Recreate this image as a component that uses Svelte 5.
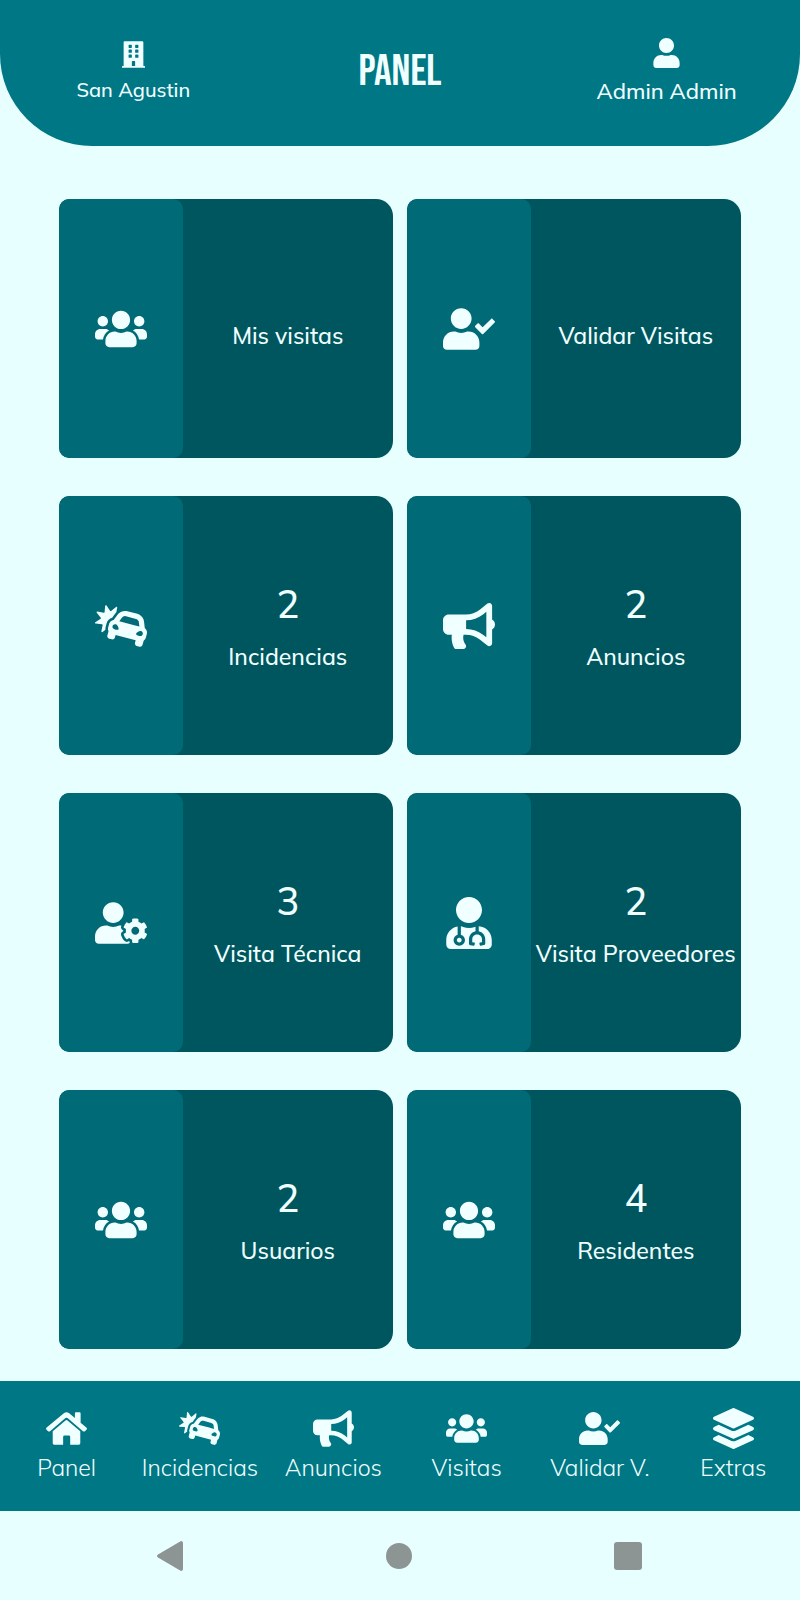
<script>
  const icons = {
    users: {
      box: '0 0 640 512',
      d: 'M96 224c35.3 0 64-28.7 64-64s-28.7-64-64-64-64 28.7-64 64 28.7 64 64 64zm448 0c35.3 0 64-28.7 64-64s-28.7-64-64-64-64 28.7-64 64 28.7 64 64 64zm32 32h-64c-17.6 0-33.5 7.1-45.1 18.6 40.3 22.1 68.9 62 75.1 109.4h66c17.7 0 32-14.3 32-32v-32c0-35.3-28.7-64-64-64zm-256 0c61.9 0 112-50.1 112-112S381.9 32 320 32 208 82.1 208 144s50.1 112 112 112zm76.8 32h-8.3c-20.8 10-43.9 16-68.5 16s-47.6-6-68.5-16h-8.3C179.6 288 128 339.6 128 403.2V432c0 26.5 21.5 48 48 48h288c26.5 0 48-21.5 48-48v-28.8c0-63.6-51.6-115.2-115.2-115.2zm-223.7-13.4C161.5 263.1 145.6 256 128 256H64c-35.3 0-64 28.7-64 64v32c0 17.7 14.3 32 32 32h65.9c6.3-47.4 34.9-87.3 75.2-109.4z'
    },
    check: {
      box: '0 0 640 512',
      d: 'M224 256c70.7 0 128-57.3 128-128S294.7 0 224 0 96 57.3 96 128s57.3 128 128 128zm89.6 32h-16.7c-22.2 10.2-46.9 16-72.9 16s-50.6-5.8-72.9-16h-16.7C60.2 288 0 348.2 0 422.4V464c0 26.5 21.5 48 48 48h352c26.5 0 48-21.5 48-48v-41.6c0-74.2-60.2-134.4-134.4-134.4zm323-128.4l-27.8-28.1c-4.6-4.7-12.1-4.7-16.8-.1l-104.8 104-45.5-45.8c-4.6-4.7-12.1-4.7-16.8-.1l-28.1 27.9c-4.7 4.6-4.7 12.1-.1 16.8l81.7 82.3c4.6 4.7 12.1 4.7 16.8.1l141.3-140.2c4.6-4.7 4.7-12.2.1-16.8z'
    },
    crash: {
      box: '0 0 640 512',
      d: 'M143.25 220.81l-12.42 46.37c-3.01 11.25-3.63 22.89-2.41 34.39l-35.2 28.98c-6.57 5.41-16.31-.43-14.62-8.77l15.44-76.68c1.06-5.26-2.66-10.28-8-10.79l-77.86-7.55c-8.47-.82-11.23-11.83-4.14-16.54l65.15-43.3c4.46-2.97 5.38-9.15 1.98-13.29L21.46 93.22c-5.41-6.57.43-16.3 8.78-14.62l76.68 15.44c5.26 1.06 10.28-2.66 10.8-8l7.55-77.86c.82-8.48 11.83-11.23 16.55-4.14l43.3 65.14c2.97 4.46 9.15 5.38 13.29 1.98l60.4-49.71c6.57-5.41 16.3.43 14.62 8.77L262.1 86.38c-2.71 3.05-5.43 6.09-7.91 9.4l-32.15 42.97-10.71 14.32c-32.73 8.76-59.18 34.53-68.08 67.74zm494.57 132.51l-12.42 46.36c-3.13 11.68-9.38 21.61-17.55 29.36a66.876 66.876 0 0 1-8.76 7l-13.99 52.23c-1.14 4.27-3.1 8.1-5.65 11.38-7.67 9.84-20.74 14.68-33.54 11.25L515 502.62c-17.07-4.57-27.2-22.12-22.63-39.19l8.28-30.91-247.28-66.26-8.28 30.91c-4.57 17.07-22.12 27.2-39.19 22.63l-30.91-8.28c-12.8-3.43-21.7-14.16-23.42-26.51-.57-4.12-.35-8.42.79-12.68l13.99-52.23a66.62 66.62 0 0 1-4.09-10.45c-3.2-10.79-3.65-22.52-.52-34.2l12.42-46.37c5.31-19.8 19.36-34.83 36.89-42.21a64.336 64.336 0 0 1 18.49-4.72l18.13-24.23 32.15-42.97c3.45-4.61 7.19-8.9 11.2-12.84 8-7.89 17.03-14.44 26.74-19.51 4.86-2.54 9.89-4.71 15.05-6.49 10.33-3.58 21.19-5.63 32.24-6.04 11.05-.41 22.31.82 33.43 3.8l122.68 32.87c11.12 2.98 21.48 7.54 30.85 13.43a111.11 111.11 0 0 1 34.69 34.5c8.82 13.88 14.64 29.84 16.68 46.99l6.36 53.29 3.59 30.05a64.49 64.49 0 0 1 22.74 29.93c4.39 11.88 5.29 25.19 1.75 38.39zM255.58 234.34c-18.55-4.97-34.21 4.04-39.17 22.53-4.96 18.49 4.11 34.12 22.65 39.09 18.55 4.97 45.54 15.51 50.49-2.98 4.96-18.49-15.43-53.67-33.97-58.64zm290.61 28.17l-6.36-53.29c-.58-4.87-1.89-9.53-3.82-13.86-5.8-12.99-17.2-23.01-31.42-26.82l-122.68-32.87a48.008 48.008 0 0 0-50.86 17.61l-32.15 42.97 172 46.08 75.29 20.18zm18.49 54.65c-18.55-4.97-53.8 15.31-58.75 33.79-4.95 18.49 23.69 22.86 42.24 27.83 18.55 4.97 34.21-4.04 39.17-22.53 4.95-18.48-4.11-34.12-22.66-39.09z'
    },
    horn: {
      box: '0 0 576 512',
      d: 'M576 240c0-23.63-12.95-44.04-32-55.12V32.01C544 23.26 537.02 0 512 0c-7.12 0-14.19 2.38-19.98 7.02l-85.03 68.03C364.28 109.19 310.66 128 256 128H64c-35.35 0-64 28.65-64 64v96c0 35.35 28.65 64 64 64h33.7c-1.39 10.48-2.18 21.14-2.18 32 0 39.77 9.26 77.35 25.56 110.94 5.19 10.69 16.52 17.06 28.4 17.06h74.28c26.05 0 41.69-29.84 25.9-50.56-16.4-21.52-26.15-48.36-26.15-77.44 0-11.11 1.62-21.79 4.41-32H256c54.66 0 108.28 18.81 150.98 52.95l85.03 68.03a32.023 32.023 0 0 0 19.98 7.02c24.92 0 32-22.78 32-32V295.13C563.05 284.04 576 263.63 576 240zm-96 141.42l-33.05-26.44C392.95 311.78 325.12 288 256 288v-96c69.12 0 136.95-23.78 190.95-66.98L480 98.58v282.84z'
    },
    cog: {
      box: '0 0 640 512',
      d: 'M610.5 373.3c2.6-14.1 2.6-28.5 0-42.6l25.8-14.9c3-1.7 4.3-5.2 3.3-8.5-6.7-21.6-18.2-41.2-33.2-57.4-2.3-2.5-6-3.1-9-1.4l-25.8 14.9c-10.9-9.3-23.4-16.5-36.9-21.3v-29.8c0-3.4-2.4-6.4-5.7-7.1-22.3-5-45-4.8-66.2 0-3.3.7-5.7 3.7-5.7 7.1v29.8c-13.5 4.8-26 12-36.9 21.3l-25.8-14.9c-2.9-1.7-6.7-1.1-9 1.4-15 16.2-26.5 35.8-33.2 57.4-1 3.3.4 6.8 3.3 8.5l25.8 14.9c-2.6 14.1-2.6 28.5 0 42.6l-25.8 14.9c-3 1.7-4.3 5.2-3.3 8.5 6.7 21.6 18.2 41.1 33.2 57.4 2.3 2.5 6 3.1 9 1.4l25.8-14.9c10.9 9.3 23.4 16.5 36.9 21.3v29.8c0 3.4 2.4 6.4 5.7 7.1 22.3 5 45 4.8 66.2 0 3.3-.7 5.7-3.7 5.7-7.1v-29.8c13.5-4.8 26-12 36.9-21.3l25.8 14.9c2.9 1.7 6.7 1.1 9-1.4 15-16.2 26.5-35.8 33.2-57.4 1-3.3-.4-6.8-3.3-8.5l-25.8-14.9zM496 400.5c-26.8 0-48.5-21.8-48.5-48.5s21.8-48.5 48.5-48.5 48.5 21.8 48.5 48.5-21.7 48.5-48.5 48.5zM224 256c70.7 0 128-57.3 128-128S294.7 0 224 0 96 57.3 96 128s57.3 128 128 128zm201.2 226.5c-2.3-1.2-4.6-2.6-6.8-3.9l-7.9 4.6c-6 3.4-12.8 5.3-19.6 5.3-10.9 0-21.4-4.6-28.9-12.6-18.3-19.8-32.3-43.9-40.2-69.6-5.5-17.7 1.9-36.4 17.9-45.7l7.9-4.6c-.1-2.6-.1-5.2 0-7.8l-7.9-4.6c-16-9.2-23.4-28-17.9-45.7.9-2.9 2.2-5.8 3.2-8.7-3.8-.3-7.5-1.2-11.4-1.2h-16.7c-22.2 10.2-46.9 16-72.9 16s-50.6-5.8-72.9-16h-16.7C60.2 288 0 348.2 0 422.4V464c0 26.5 21.5 48 48 48h352c10.1 0 19.5-3.2 27.2-8.5-1.2-3.8-2-7.7-2-11.8v-9.2z'
    },
    doctor: {
      box: '-32 0 512 512',
      d: 'M224 256c70.7 0 128-57.3 128-128S294.7 0 224 0 96 57.3 96 128s57.3 128 128 128zM104 424c0 13.3 10.7 24 24 24s24-10.7 24-24-10.7-24-24-24-24 10.7-24 24zm216-135.4v49c36.5 7.4 64 39.8 64 78.4v41.7c0 7.6-5.4 14.2-12.9 15.7l-32.2 6.4c-4.3.9-8.5-1.9-9.4-6.3l-3.1-15.7c-.9-4.3 1.9-8.6 6.3-9.4l19.3-3.9V416c0-62.8-96-65.1-96 1.9v26.7l19.3 3.9c4.3.9 7.1 5.1 6.3 9.4l-3.1 15.7c-.9 4.3-5.1 7.1-9.4 6.3l-31.2-4.2c-7.9-1.1-13.8-7.8-13.8-15.9V416c0-38.6 27.5-70.9 64-78.4v-45.2c-2.2.7-4.4 1.1-6.6 1.9-18 6.3-37.3 9.8-57.4 9.8s-39.4-3.5-57.4-9.8c-7.4-2.6-14.9-4.2-22.6-5.2v81.6c23.1 6.9 40 28.1 40 53.4 0 30.9-25.1 56-56 56s-56-25.1-56-56c0-25.3 16.9-46.5 40-53.4v-80.4C48.5 301 0 355.8 0 422.4v44.8C0 491.9 20.1 512 44.8 512h358.4c24.7 0 44.8-20.1 44.8-44.8v-44.8c0-72-56.8-130.3-128-133.8z'
    },
    user: {
      box: '0 0 448 512',
      d: 'M224 256c70.7 0 128-57.3 128-128S294.7 0 224 0 96 57.3 96 128s57.3 128 128 128zm89.6 32h-16.7c-22.2 10.2-46.9 16-72.9 16s-50.6-5.8-72.9-16h-16.7C60.2 288 0 348.2 0 422.4V464c0 26.5 21.5 48 48 48h352c26.5 0 48-21.5 48-48v-41.6c0-74.2-60.2-134.4-134.4-134.4z'
    },
    building: {
      box: '0 0 448 512',
      d: 'M436 480h-20V24c0-13.3-10.7-24-24-24H56C42.7 0 32 10.7 32 24v456H12c-6.6 0-12 5.4-12 12v20h448v-20c0-6.6-5.4-12-12-12zM128 76q0-12 12-12h40q12 0 12 12v40q0 12-12 12h-40q-12 0-12-12zm128 0q0-12 12-12h40q12 0 12 12v40q0 12-12 12h-40q-12 0-12-12zM128 172q0-12 12-12h40q12 0 12 12v40q0 12-12 12h-40q-12 0-12-12zm128 0q0-12 12-12h40q12 0 12 12v40q0 12-12 12h-40q-12 0-12-12zM128 268q0-12 12-12h40q12 0 12 12v40q0 12-12 12h-40q-12 0-12-12zm128 0q0-12 12-12h40q12 0 12 12v40q0 12-12 12h-40q-12 0-12-12zM192 480v-84q0-12 12-12h40q12 0 12 12v84z'
    },
    home: {
      box: '0 0 122 98',
      d: 'M54 3Q61-2 68 3L86 18V4Q86 1 89 1h11q3 0 3 3v28l17 14q3 3 1 6l-5 5q-3 2-6 0L64 18q-3-2-6 0L12 57q-3 2-6 0l-5-5q-2-3 1-6zM58 25q3-2 6 0l38 32v36q0 4-4 4H72V74q0-4-4-4H55q-4 0-4 4v23H24q-4 0-4-4V57z'
    },
    layers: {
      box: '0 0 512 512',
      d: 'M12.41 148.02l232.94 105.67c6.8 3.09 14.49 3.09 21.29 0l232.94-105.67c16.55-7.51 16.55-32.52 0-40.03L266.65 2.31a25.607 25.607 0 0 0-21.29 0L12.41 107.98c-16.55 7.51-16.55 32.53 0 40.04zm487.18 88.28l-58.09-26.33-161.64 73.27c-7.56 3.43-15.59 5.17-23.86 5.17s-16.29-1.74-23.86-5.17L70.51 209.97l-58.1 26.33c-16.55 7.5-16.55 32.5 0 40l232.94 105.59c6.8 3.08 14.49 3.08 21.29 0L499.59 276.3c16.55-7.5 16.55-32.5 0-40zm0 127.8l-57.87-26.23-161.86 73.37c-7.56 3.43-15.59 5.17-23.86 5.17s-16.29-1.74-23.86-5.17L70.29 337.87 12.41 364.1c-16.55 7.5-16.55 32.5 0 40l232.94 105.59c6.8 3.08 14.49 3.08 21.29 0L499.59 404.1c16.55-7.5 16.55-32.5 0-40z'
    }
  };

  const cards = [
    { icon: 'users', label: 'Mis visitas' },
    { icon: 'check', label: 'Validar Visitas' },
    { icon: 'crash', label: 'Incidencias', count: 2 },
    { icon: 'horn', label: 'Anuncios', count: 2 },
    { icon: 'cog', label: 'Visita Técnica', count: 3 },
    { icon: 'doctor', label: 'Visita Proveedores', count: 2 },
    { icon: 'users', label: 'Usuarios', count: 2 },
    { icon: 'users', label: 'Residentes', count: 4 }
  ];

  const tabs = [
    { icon: 'home', label: 'Panel' },
    { icon: 'crash', label: 'Incidencias' },
    { icon: 'horn', label: 'Anuncios' },
    { icon: 'users', label: 'Visitas' },
    { icon: 'check', label: 'Validar V.' },
    { icon: 'layers', label: 'Extras' }
  ];
</script>

{#snippet icon(name)}
  <svg class="icon" viewBox={icons[name].box} aria-hidden="true">
    <path fill-rule="evenodd" d={icons[name].d} />
  </svg>
{/snippet}

<div class="app">
  <header>
    <button class="place">
      {@render icon('building')}
      <span>San Agustin</span>
    </button>
    <h1>PANEL</h1>
    <button class="account">
      {@render icon('user')}
      <span>Admin Admin</span>
    </button>
  </header>

  <main>
    {#each cards as card}
      <button class="card">
        <span class="side">{@render icon(card.icon)}</span>
        <span class="info">
          {#if card.count}<span class="count">{card.count}</span>{/if}
          <span class="label">{card.label}</span>
        </span>
      </button>
    {/each}
  </main>

  <nav class="tabs">
    {#each tabs as tab}
      <button>
        {@render icon(tab.icon)}
        <span>{tab.label}</span>
      </button>
    {/each}
  </nav>

  <footer>
    <button aria-label="Atrás">
      <svg viewBox="0 0 30 30"><path d="M26 0Q28 0 28 2v26q0 2-2 2L3 16.5Q1 15 3 13.500z" /></svg>
    </button>
    <button aria-label="Inicio">
      <svg viewBox="0 0 30 30"><circle cx="15" cy="15" r="13" /></svg>
    </button>
    <button aria-label="Recientes">
      <svg viewBox="0 0 30 30"><rect x="1" y="1" width="28" height="28" rx="3" /></svg>
    </button>
  </footer>
</div>

<style>
  :global(body) {
    margin: 0;
    background: #e8ffff;
  }

  .app {
    display: flex;
    flex-direction: column;
    min-height: 100vh;
    background: #e8ffff;
    color: #f0ffff;
    font-family: Mulish, Muli, Inter, 'Open Sans', sans-serif;
    font-weight: 500;
  }

  button {
    padding: 0;
    border: 0;
    background: none;
    color: inherit;
    font: inherit;
    white-space: nowrap;
    cursor: pointer;
  }

  .icon {
    display: block;
    fill: currentColor;
  }

  header {
    display: grid;
    grid-template-columns: repeat(3, 1fr);
    align-items: start;
    height: 146px;
    border-radius: 0 0 92px 92px;
    background: #007785;
    font-size: 22px;
    line-height: 30px;
  }

  header button {
    display: flex;
    flex-direction: column;
    align-items: center;
  }

  .place {
    padding-top: 41px;
    gap: 7px;
    font-size: 20px;
  }

  .place .icon {
    width: 23px;
    height: 27px;
  }

  .account {
    padding-top: 38px;
    gap: 8px;
  }

  .account .icon {
    width: 27px;
    height: 30px;
  }

  h1 {
    margin: 47px 0 0;
    font-family: 'Bebas Neue', 'Roboto Condensed', 'Liberation Sans Narrow', 'Liberation Sans', sans-serif;
    font-size: 44px;
    line-height: 50px;
    font-weight: 400;
    text-align: center;
  }

  main {
    flex: 1;
    display: grid;
    grid-template-columns: repeat(2, 1fr);
    grid-auto-rows: 259px;
    gap: 38px 14px;
    padding: 53px 59px 32px;
  }

  .card {
    display: flex;
    overflow: hidden;
    border-radius: 10px 17px 17px 10px;
    background: #00565e;
  }

  .side {
    display: flex;
    flex: 0 0 37%;
    align-items: center;
    justify-content: center;
    height: 100%;
    border-radius: 10px;
    background: #006b77;
  }

  .side .icon {
    width: 52px;
    height: 52px;
  }

  .info {
    display: flex;
    flex: 1;
    flex-direction: column;
    align-items: center;
    justify-content: center;
    height: 100%;
  }

  .count {
    font-size: 38px;
    line-height: 48px;
  }

  .label {
    margin-top: 14px;
    font-size: 23px;
    line-height: 30px;
  }

  .tabs {
    display: grid;
    grid-template-columns: repeat(6, 1fr);
    padding: 27px 0 28px;
    background: #007785;
    font-size: 23px;
    line-height: 30px;
    font-weight: 300;
  }

  .tabs button {
    display: flex;
    flex-direction: column;
    align-items: center;
    gap: 4px;
  }

  .tabs .icon {
    width: 41px;
    height: 41px;
  }

  footer {
    display: flex;
    align-items: center;
    justify-content: space-between;
    height: 89px;
    padding: 0 157px 0 155px;
  }

  footer svg {
    display: block;
    width: 30px;
    height: 30px;
    fill: #8c9594;
  }
</style>
